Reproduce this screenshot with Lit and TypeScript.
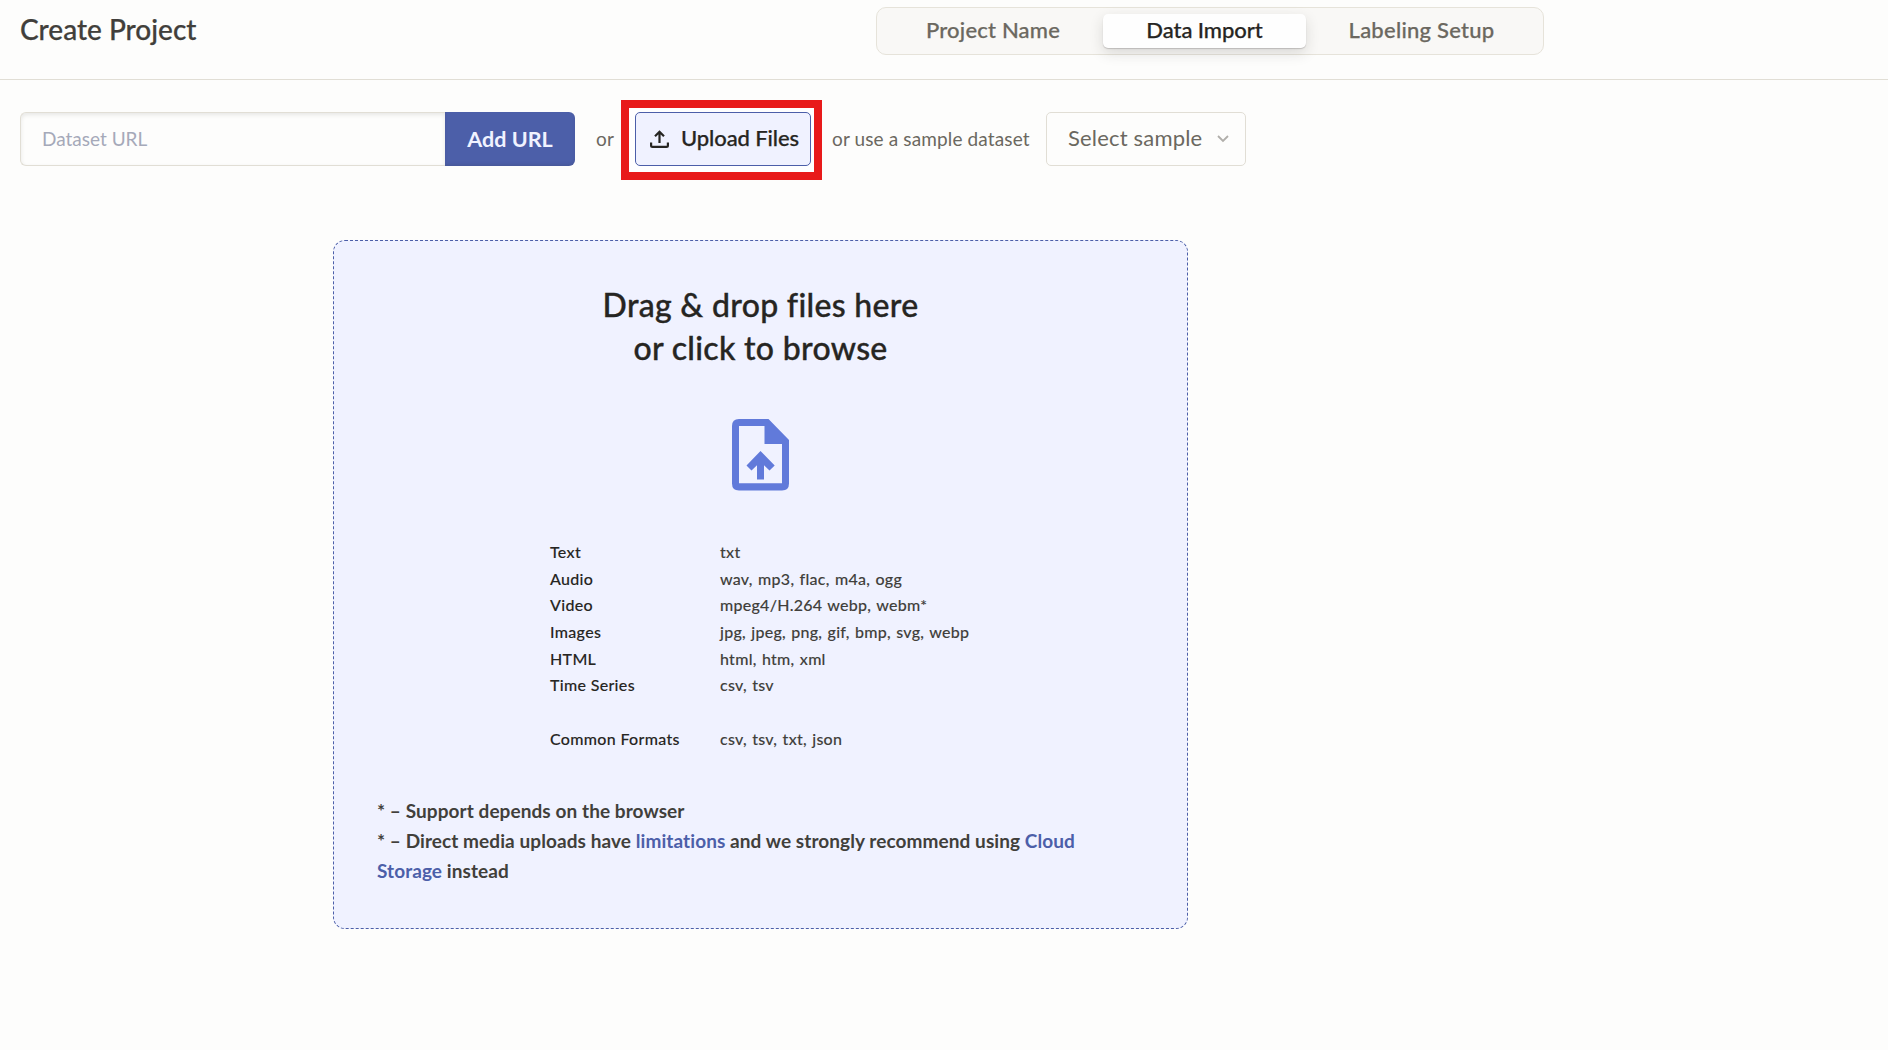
import { LitElement, html, css } from "lit";
import { customElement } from "lit/decorators.js";

const FORMATS: [string, string][] = [
  ["Text", "txt"],
  ["Audio", "wav, mp3, flac, m4a, ogg"],
  ["Video", "mpeg4/H.264 webp, webm*"],
  ["Images", "jpg, jpeg, png, gif, bmp, svg, webp"],
  ["HTML", "html, htm, xml"],
  ["Time Series", "csv, tsv"],
  ["", ""],
  ["Common Formats", "csv, tsv, txt, json"],
];

@customElement("app-root")
export class AppRoot extends LitElement {
  static styles = css`
    :host {
      display: block;
      min-height: 1050px;
      background: #fdfdfc;
      color: #262522;
      font-family: Lato, "Open Sans", sans-serif;
      font-weight: 500;
      font-variant-ligatures: none;
    }
    * { box-sizing: border-box; }
    .header {
      display: flex;
      align-items: flex-start;
      height: 80px;
      padding: 7px 20px 0;
      border-bottom: 1px solid #e1ded5;
    }
    .title { width: 856px; font-size: 28px; line-height: 44px; color: #413f3b; white-space: nowrap; -webkit-text-stroke: 0.25px; }
    .tabs {
      display: flex;
      width: 668px;
      height: 48px;
      padding: 6px;
      border: 1px solid #e6e3da;
      border-radius: 10px;
      background: #f9f8f6;
    }
    .tab {
      display: flex;
      align-items: center;
      justify-content: center;
      padding-bottom: 3px;
      border-radius: 5px;
      font-size: 22px;
      color: #6b6860;
      white-space: nowrap;
      -webkit-text-stroke: 0.25px;
    }
    .t1 { width: 220px; letter-spacing: 0.2px; }
    .t2 { width: 203px; letter-spacing: -0.05px; }
    .t3 { flex: 1; letter-spacing: 0.25px; }
    .active { background: #fefefe; color: #262522; box-shadow: 0 1px 1px rgba(38,37,34,.2), 0 5px 14px rgba(38,37,34,.15); }
    .toolbar { display: flex; align-items: center; height: 54px; margin: 32px 0 0 20px; }
    .field {
      width: 425px; height: 54px; padding: 0 21px 2px;
      border: 1px solid #e1ded5; border-right: 0; border-radius: 6px 0 0 6px;
      background: #fdfdfc; box-shadow: inset 0 2px 4px rgba(38,37,34,.1);
      font: 400 19px Lato, sans-serif; color: #262522;
    }
    .field::placeholder { color: #a5a9b9; opacity: 1; }
    .add {
      width: 130px; height: 54px; padding: 0 0 1px; border: 0; border-radius: 0 6px 6px 0;
      background: #4c5fa9; box-shadow: inset 0 -2px 3px rgba(38,37,34,.1); color: #f0f2ff; font: 700 21.500px Lato, sans-serif;
    }
    .hint { padding-bottom: 2px; font-size: 19px; font-weight: 400; letter-spacing: 0.13px; color: #6b6860; white-space: nowrap; }
    .or { width: 46px; padding-left: 21px; }
    .marker { flex: none; width: 201px; height: 80px; margin-top: 2px; padding: 4px 6px 0; border: 8px solid #e81a1a; background: #fff; }
    .upload {
      display: flex; align-items: center; width: 176px; height: 54px; padding: 0 0 0 14px; gap: 12px;
      border: 1px solid #4c5fa9; border-radius: 5px; background: #f0f2ff;
      color: #262522; font: 500 22px Lato, sans-serif; letter-spacing: -0.1px; white-space: nowrap; -webkit-text-stroke: 0.25px;
    }
    .upload span { padding-bottom: 3px; }
    .sample { flex: none; width: 224px; padding-left: 10px; }
    .select {
      display: flex; align-items: center; justify-content: space-between; flex: none;
      width: 200px; height: 54px; padding: 0 16px 0 21px;
      border: 1px solid #e1ded5; border-radius: 5px; font-size: 22px; font-weight: 400; letter-spacing: 0.18px; color: #6b6860; white-space: nowrap;
    }
    .select span { padding-bottom: 3px; }
    .drop {
      display: flex; flex-direction: column; align-items: center;
      width: 855px; height: 689px; margin: 74px 0 0 333px; padding: 42px 43px 0;
      border: 1px dashed #4c5fa9; border-radius: 12px; background: #f0f2ff;
    }
    .lead { font-size: 32px; line-height: 43px; text-align: center; letter-spacing: 0.3px; -webkit-text-stroke: 0.35px; }
    .file { display: block; flex: none; margin: 50px 1px 48px 0; }
    .formats {
      display: grid; grid-template-columns: 170px 251px; grid-auto-rows: 26.700px;
      font-size: 16px; line-height: 26.700px; letter-spacing: 0.26px; word-spacing: 1px; white-space: nowrap; -webkit-text-stroke: 0.1px;
    }
    .kind { letter-spacing: 0.32px; word-spacing: 0; }
    .exts { color: #413f3b; }
    .notes { align-self: stretch; margin-top: 43px; font-size: 19px; line-height: 30px; font-weight: 700; letter-spacing: 0.08px; color: #413f3b; white-space: nowrap; }
    .link { color: #4c5fa9; }
  `;

  render() {
    return html`
      <header class="header">
        <div class="title"><span>Create Project</span></div>
        <nav class="tabs">
          <div class="tab t1"><span>Project Name</span></div>
          <div class="tab t2 active"><span>Data Import</span></div>
          <div class="tab t3"><span>Labeling Setup</span></div>
        </nav>
      </header>
      <div class="toolbar">
        <input class="field" placeholder="Dataset URL" />
        <button class="add">Add URL</button>
        <span class="hint or">or</span>
        <div class="marker">
          <button class="upload">
            <svg width="19" height="18" viewBox="0 0 19 18" fill="none" stroke="#262522" stroke-width="2.200">
              <path d="M9.500 13V2M5 6.300L9.500 1.800L14 6.300M1.100 12.500V15.500Q1.100 16.900 2.500 16.900H16.500Q17.900 16.900 17.900 15.500V12.500" />
            </svg>
            <span>Upload Files</span>
          </button>
        </div>
        <span class="hint sample">or use a sample dataset</span>
        <div class="select">
          <span>Select sample</span>
          <svg width="12" height="8" viewBox="0 0 12 8" fill="none" stroke="#b0aeaa" stroke-width="1.800"><path d="M1 1L6 6L11 1" /></svg>
        </div>
      </div>
      <section class="drop">
        <div class="lead">Drag &amp; drop files here<br />or click to browse</div>
        <svg class="file" width="57" height="72" viewBox="0 0 57 72">
          <path fill="#617ada" fill-rule="evenodd" d="M7 0H36.500L57 21V64.500Q57 71.500 50 71.500H7Q0 71.500 0 64.500V7Q0 0 7 0ZM7 7V64.300H50V25H32.500V7Z" />
          <path fill="#617ada" d="M28.500 32L42.700 46.500L37.500 51.500L32 46.300V60.500H25V46.300L19.500 51.500L14.500 46.500Z" />
        </svg>
        <div class="formats">
          ${FORMATS.map(([kind, exts]) => html`<span class="kind">${kind}</span><span class="exts">${exts}</span>`)}
        </div>
        <div class="notes">
          * – Support depends on the browser<br />
          * – Direct media uploads have <span class="link">limitations</span> and we strongly recommend using <span class="link">Cloud<br />Storage</span> instead
        </div>
      </section>
    `;
  }
}
